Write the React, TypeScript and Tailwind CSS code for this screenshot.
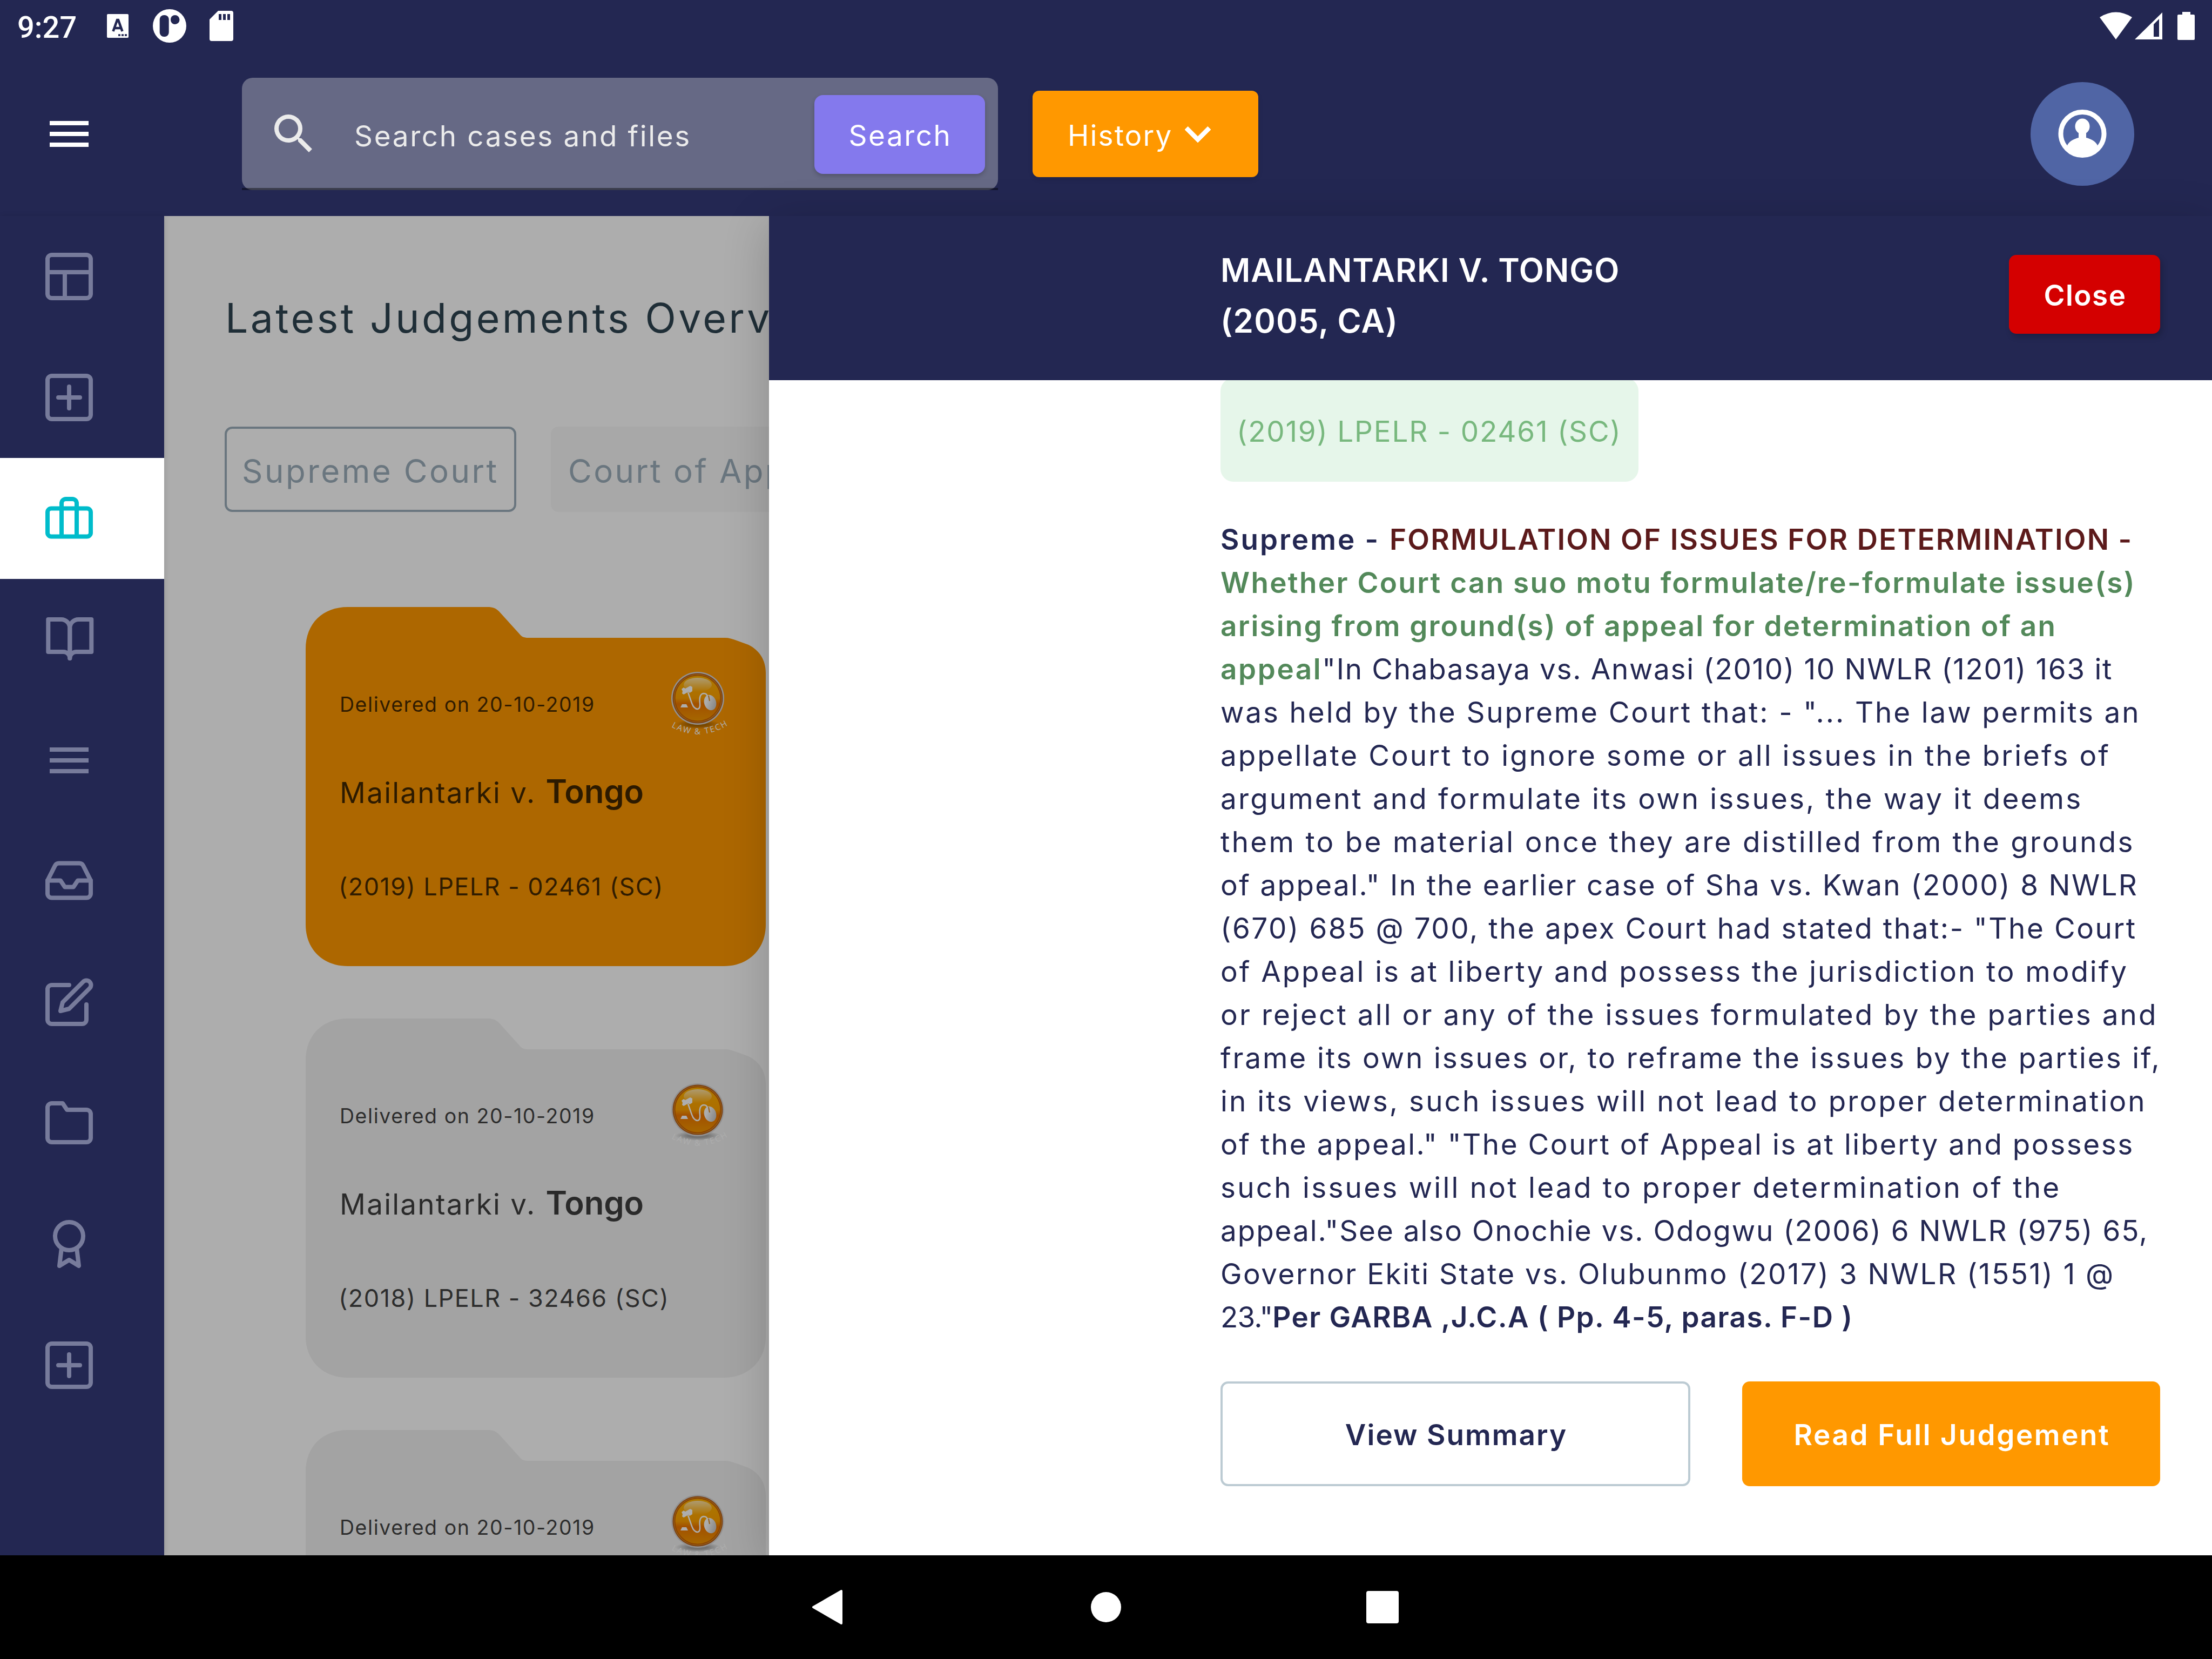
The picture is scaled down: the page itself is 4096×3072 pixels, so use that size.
import React from "react";

/* ---------- icons ---------- */

function Stroke({ children }: { children: React.ReactNode }) {
  return (
    <svg
      viewBox="0 0 96 96"
      className="block size-[96px]"
      fill="none"
      stroke="currentColor"
      strokeWidth="8"
      strokeLinecap="round"
      strokeLinejoin="round"
    >
      {children}
    </svg>
  );
}

const layoutIcon = (
  <>
    <rect x="8" y="8" width="80" height="80" rx="8" />
    <path d="M8 40H88M40 40V88" strokeLinecap="butt" />
  </>
);
const plusIcon = (
  <>
    <rect x="8" y="8" width="80" height="80" rx="8" />
    <path d="M48 28V68M28 48H68" />
  </>
);
const caseIcon = (
  <>
    <rect x="8" y="29.5" width="80" height="52" rx="7" />
    <path d="M34 81V20a8 8 0 0 1 8-8h12a8 8 0 0 1 8 8V81" />
  </>
);
const bookIcon = (
  <g transform="translate(1.3 -1)">
    <path d="M8 12H32A16 16 0 0 1 48 28V84A12 12 0 0 0 36 72H8Z" />
    <path d="M88 12H64A16 16 0 0 0 48 28V84A12 12 0 0 1 60 72H88Z" />
  </g>
);
const linesIcon = <path d="M12 28H84M12 48H84M12 68H84" strokeLinecap="butt" />;
const inboxIcon = (
  <g transform="translate(0 -1.5) scale(4)" strokeWidth="2">
    <path d="M22 12H16L14 15H10L8 12H2" />
    <path d="M5.45 5.11L2 12v6a2 2 0 0 0 2 2h16a2 2 0 0 0 2-2v-6l-3.45-6.89A2 2 0 0 0 16.76 4H7.24a2 2 0 0 0-1.79 1.11z" />
  </g>
);
const editIcon = (
  <g transform="scale(4)" strokeWidth="2">
    <path d="M12 4H4a2 2 0 0 0-2 2v14a2 2 0 0 0 2 2h14a2 2 0 0 0 2-2v-7" />
    <path d="M18.5 2.5a2.121 2.121 0 0 1 3 3L12 15l-4 1 1-4 9.5-9.5z" />
  </g>
);
const folderIcon = (
  <g transform="translate(0 -1) scale(4)" strokeWidth="2">
    <path d="M22 19a2 2 0 0 1-2 2H4a2 2 0 0 1-2-2V5a2 2 0 0 1 2-2h5l2 3h9a2 2 0 0 1 2 2z" />
  </g>
);
const awardIcon = (
  <>
    <circle cx="48" cy="33" r="26" />
    <path d="M34 55L30 88L48 77L66 88L62 55" />
  </>
);

const sideItems = [
  { icon: layoutIcon, active: false },
  { icon: plusIcon, active: false },
  { icon: caseIcon, active: true },
  { icon: bookIcon, active: false },
  { icon: linesIcon, active: false },
  { icon: inboxIcon, active: false },
  { icon: editIcon, active: false },
  { icon: folderIcon, active: false },
  { icon: awardIcon, active: false },
  { icon: plusIcon, active: false },
];

function LawTechLogo({ id }: { id: string }) {
  return (
    <svg viewBox="0 0 103 118" className="block h-[118px] w-[103px] overflow-visible">
      <defs>
        <linearGradient id={`${id}-body`} x1="0" y1="0" x2="0" y2="1">
          <stop offset="0" stopColor="#ffb300" />
          <stop offset="0.5" stopColor="#ffa200" />
          <stop offset="0.62" stopColor="#ee7600" />
          <stop offset="1" stopColor="#f59a00" />
        </linearGradient>
        <linearGradient id={`${id}-gloss`} x1="0" y1="0" x2="0" y2="1">
          <stop offset="0" stopColor="#fff" stopOpacity="0.65" />
          <stop offset="1" stopColor="#fff" stopOpacity="0" />
        </linearGradient>
        <linearGradient id={`${id}-mouse`} x1="0" y1="0" x2="1" y2="1">
          <stop offset="0.3" stopColor="#fff" />
          <stop offset="1" stopColor="#b9b9b9" />
        </linearGradient>
        <radialGradient id={`${id}-shade`}>
          <stop offset="0.4" stopColor="#000" stopOpacity="0.3" />
          <stop offset="1" stopColor="#000" stopOpacity="0" />
        </radialGradient>
        <path id={`${id}-arc`} d="M1 102Q51 130 102 101" />
      </defs>
      <ellipse cx="50" cy="97" rx="42" ry="9" fill={`url(#${id}-shade)`} />
      <circle cx="50" cy="49" r="49" fill="#d8d8d8" />
      <circle cx="50" cy="49" r="46.500" fill="#b8601c" />
      <circle cx="50" cy="49" r="44.500" fill="#e0a030" />
      <circle cx="50" cy="49" r="42.500" fill={`url(#${id}-body)`} stroke="#cf6400" strokeWidth="2" />
      <ellipse cx="50" cy="24" rx="26" ry="13" fill={`url(#${id}-gloss)`} />
      <path d="M20 32L24 29L27 31L36 26L40 28L40 36L35 39L33 37L24 42L21 40L22 36Z" fill="#fff" />
      <path d="M32 38L39 58Q43 69 50 69Q55 68 54 58Q52 41 61 40Q67 40 68 46" fill="none" stroke="#fff" strokeWidth="2.500" />
      <path d="M18 66L21 60H29L32 66Z" fill="#fff" />
      <ellipse cx="73" cy="57" rx="11" ry="14.500" fill={`url(#${id}-mouse)`} transform="rotate(-18 73 57)" />
      <path d="M70 44L72 54" fill="none" stroke="#d98a20" strokeWidth="2" />
      <text fill="#fff" fontSize="15.500" fontFamily="Open Sans, sans-serif">
        <textPath href={`#${id}-arc`} textLength="110">
          LAW &amp; TECH
        </textPath>
      </text>
    </svg>
  );
}

/* ---------- system bars ---------- */

function StatusBar() {
  return (
    <div className="flex h-[96px] items-center justify-between">
      <div className="flex items-center pl-[32px]">
        <span className="w-[166px] pt-[6px] font-['Roboto',sans-serif] text-[56px] leading-[60px] font-medium text-white">
          9:27
        </span>
        <svg viewBox="0 0 40 44" className="block h-[44px] w-[40px]">
          <rect width="40" height="44" rx="2" fill="#fff" />
          <path d="M11.500 32L19 11H21L28.500 32M14 26H26" fill="none" stroke="#232752" strokeWidth="4.500" />
          <path d="M21 39H37" stroke="#232752" strokeWidth="3.500" strokeDasharray="4 2" />
        </svg>
        <svg viewBox="0 0 62 62" className="ml-[45px] block size-[62px]">
          <circle cx="31" cy="31" r="31" fill="#fff" />
          <rect x="12.700" y="11" width="17" height="40" rx="8" fill="#232752" />
          <path d="M33 19a8 8 0 0 1 8-8a8.500 8.500 0 0 1 0 17a8 8 0 0 1-8-8z" fill="#232752" />
        </svg>
        <svg viewBox="0 0 44 56" className="ml-[43px] block h-[56px] w-[44px]">
          <path d="M16 0H40a4 4 0 0 1 4 4V52a4 4 0 0 1-4 4H4a4 4 0 0 1-4-4V16Z" fill="#fff" />
          <path d="M17 6h5v11h-5zM25 6h5v11h-5zM33 6h5v11h-5z" fill="#232752" />
        </svg>
      </div>
      <div className="flex items-center pr-[32px]">
        <svg viewBox="0 0 60 52" className="block h-[52px] w-[60px]">
          <path d="M0 10Q30 -9 60 10L30 51Z" fill="#fff" />
        </svg>
        <svg viewBox="0 0 52 50" className="ml-[5px] block h-[50px] w-[52px]">
          <path fillRule="evenodd" d="M0 50L51 0V50ZM35 45H45V12L35 22Z" fill="#fff" />
        </svg>
        <svg viewBox="0 0 32 52" className="ml-[27px] block h-[52px] w-[32px]">
          <path d="M9 0H24V5H30a2 2 0 0 1 2 2V50a2 2 0 0 1-2 2H2a2 2 0 0 1-2-2V7a2 2 0 0 1 2-2H9Z" fill="#fff" />
        </svg>
      </div>
    </div>
  );
}

function NavigationBar() {
  return (
    <nav className="relative z-20 flex h-[192px] items-center justify-center bg-black">
      <div className="flex w-[512px] justify-center">
        <svg viewBox="0 0 96 96" className="block size-[96px]">
          <path d="M70 18V78L18 48Z" fill="#fff" stroke="#fff" strokeWidth="4" strokeLinejoin="round" />
        </svg>
      </div>
      <div className="flex w-[512px] justify-center">
        <div className="size-[56px] rounded-full bg-white" />
      </div>
      <div className="flex w-[512px] justify-center">
        <div className="size-[60px] rounded-[4px] bg-white" />
      </div>
    </nav>
  );
}

/* ---------- app chrome ---------- */

function TopBar() {
  return (
    <header className="flex h-[304px] items-center">
      <button className="w-[304px] pl-[80px] text-white">
        <Stroke>{linesIcon}</Stroke>
      </button>
      <div className="relative ml-[144px] h-[208px] w-[1400px]">
        <div className="flex h-full items-center rounded-[20px] bg-[#666985] pr-[24px] pl-[48px]">
          <svg viewBox="0 0 24 24" className="block size-[96px]" fill="#ebebeb">
            <path d="M15.500 14h-.79l-.28-.27A6.471 6.471 0 0 0 16 9.500 6.500 6.500 0 1 0 9.500 16c1.610 0 3.090-.59 4.230-1.570l.27.28v.79l5 4.990L20.490 19l-4.990-5zm-6 0C7.010 14 5 11.990 5 9.500S7.010 5 9.500 5 14 7.010 14 9.500 11.990 14 9.500 14z" />
          </svg>
          <span className="ml-[64px] flex-1 pt-[7px] text-[53px] leading-[80px] tracking-[2.65px] text-[#ebebeb]">
            Search cases and files
          </span>
          <button className="mt-[2px] flex h-[146px] w-[316px] items-center justify-center rounded-[16px] bg-[#8479ed] pt-[4px] pl-[2px] text-[53px] leading-[80px] tracking-[2.5px] text-white shadow-[0_4px_8px_rgba(0,0,0,0.2)]">
            Search
          </button>
        </div>
        <div className="absolute bottom-0 left-0 h-[4px] w-full bg-black/42" />
      </div>
      <button className="ml-[64px] flex h-[160px] w-[418px] items-center rounded-[12px] bg-[#ff9800] pl-[65px] text-white shadow-[0_4px_8px_rgba(0,0,0,0.12)]">
        <span className="w-[193px] pt-[6px] text-left text-[53px] leading-[80px] tracking-[2.15px]">History</span>
        <svg viewBox="0 0 24 24" className="block size-[96px]" fill="currentColor">
          <path d="M16.590 8.590L12 13.170 7.410 8.590 6 10l6 6 6-6z" stroke="currentColor" strokeWidth="0.2" />
        </svg>
      </button>
      <button className="mr-[144px] ml-auto flex size-[192px] items-center justify-center rounded-full bg-[#5065a5]">
        <svg viewBox="0 0 96 96" className="block size-[96px]">
          <circle cx="48" cy="47.500" r="40" fill="none" stroke="#fff" strokeWidth="9" />
          <ellipse cx="48" cy="34" rx="13.500" ry="14.500" fill="#fff" />
          <path
            d="M41 44H55V55C63 57 72 61 76 69C70 82 60 88 48 88C36 88 26 82 20 69C24 61 33 57 41 55Z"
            fill="#fff"
          />
        </svg>
      </button>
    </header>
  );
}

function Sidebar() {
  return (
    <aside className="relative z-[1] w-[304px] shrink-0 bg-[#232752] shadow-[2px_0_10px_rgba(0,0,0,0.1)]">
      {sideItems.map((item, i) => (
        <div
          key={i}
          className={
            item.active
              ? "flex h-[224px] items-center bg-white pl-[80px] text-[#00bccb]"
              : "flex h-[224px] items-center pl-[80px] text-[#777b9b]"
          }
        >
          <Stroke>{item.icon}</Stroke>
        </div>
      ))}
    </aside>
  );
}

/* ---------- judgements list ---------- */

function FolderCard({ id, fill, citation, tracking }: { id: string; fill: string; citation: string; tracking: string }) {
  return (
    <article className="relative h-[665px] w-[852px] shrink-0 text-black/74">
      <svg viewBox="0 0 852 665" className="absolute inset-0 h-full w-full">
        <path
          d="M0 78C0 30 32 0 78 0H337C346 0 352 2 358 8L396 50C400 55 404 57 412 57H776C784 57 790 59 798 62L820 70C840 80 852 98 852 122V588C852 634 820 665 774 665H78C32 665 0 634 0 588Z"
          fill={fill}
        />
      </svg>
      <div className="relative flex flex-col pt-[120px] pl-[63px]">
        <div className="flex h-[116px] justify-between pr-[73px]">
          <span className="pt-[31px] text-[37.5px] leading-[60px] tracking-[1.55px]">Delivered on 20-10-2019</span>
          <LawTechLogo id={id} />
        </div>
        <div className="mt-[65px] flex items-baseline leading-[80px]">
          <span className="text-[53px] tracking-[2.25px]">Mailantarki v.</span>
          <span className="ml-[18px] text-[60px] font-semibold tracking-[-0.2px]">Tongo</span>
        </div>
        <span className={`mt-[104px] ml-[-2px] text-[45px] leading-[60px] ${tracking}`}>{citation}</span>
      </div>
    </article>
  );
}

function JudgementsOverview() {
  return (
    <section className="relative h-full w-full overflow-hidden bg-white pt-[142px] pl-[112px] whitespace-nowrap">
      <h1 className="pl-[1px] text-[75px] leading-[94px] tracking-[4.4px] text-[#2e4451]">
        Latest Judgements Overview
      </h1>
      <div className="mt-[154px] flex gap-[64px] text-[60px] leading-[90px] text-[#9dafbb]">
        <div className="flex h-[158px] w-[540px] items-center rounded-[14px] border-[4px] border-[#9dafbb] pt-[6px] pl-[28px] tracking-[3.5px]">
          Supreme Court
        </div>
        <div className="flex h-[158px] w-[560px] items-center rounded-[14px] bg-[#f8f8f8] pt-[6px] pl-[32px] tracking-[3.3px]">
          Court of Appeal
        </div>
      </div>
      <div className="mt-[176px] ml-[150px] flex flex-col gap-[97px]">
        <FolderCard id="c1" fill="#ff9800" citation="(2019) LPELR - 02461 (SC)" tracking="tracking-[1.4px]" />
        <FolderCard id="c2" fill="#f0f0f0" citation="(2018) LPELR - 32466 (SC)" tracking="tracking-[1.46px]" />
        <FolderCard id="c3" fill="#f0f0f0" citation="(2018) LPELR - 32466 (SC)" tracking="tracking-[1.46px]" />
      </div>
      <div className="absolute inset-0 bg-black/32" />
    </section>
  );
}

/* ---------- case drawer ---------- */

const bodyLines: [string, string][] = [
  ['was held by the Supreme Court that: - "... The law permits an', "tracking-[2.9px]"],
  ["appellate Court to ignore some or all issues in the briefs of", "tracking-[3.06px]"],
  ["argument and formulate its own issues, the way it deems", "tracking-[3.15px]"],
  ["them to be material once they are distilled from the grounds", "tracking-[3.3px]"],
  ['of appeal." In the earlier case of Sha vs. Kwan (2000) 8 NWLR', "tracking-[2.38px]"],
  ['(670) 685 @ 700, the apex Court had stated that:- "The Court', "tracking-[2.56px]"],
  ["of Appeal is at liberty and possess the jurisdiction to modify", "tracking-[2.95px]"],
  ["or reject all or any of the issues formulated by the parties and", "tracking-[3.1px]"],
  ["frame its own issues or, to reframe the issues by the parties if,", "tracking-[2.9px]"],
  ["in its views, such issues will not lead to proper determination", "tracking-[3.1px]"],
  ['of the appeal." "The Court of Appeal is at liberty and possess', "tracking-[2.55px]"],
  ["such issues will not lead to proper determination of the", "tracking-[3.25px]"],
  ['appeal."See also Onochie vs. Odogwu (2006) 6 NWLR (975) 65,', "tracking-[1.98px]"],
  ["Governor Ekiti State vs. Olubunmo (2017) 3 NWLR (1551) 1 @", "tracking-[2.5px]"],
];

function CaseDrawer() {
  return (
    <section className="absolute top-0 right-0 bottom-0 z-10 flex w-[2672px] flex-col bg-white shadow-[0_16px_80px_rgba(0,0,0,0.2)]">
      <div className="flex h-[304px] shrink-0 items-start justify-between bg-[#232752] pr-[96px] pl-[836px] text-white">
        <h2 className="pt-[53px] text-[60px] leading-[94px] font-semibold">
          <span className="block tracking-[0.9px]">MAILANTARKI V. TONGO</span>
          <span className="block tracking-[1.2px]">(2005, CA)</span>
        </h2>
        <button className="mt-[72px] flex h-[146px] w-[280px] items-center justify-center rounded-[14px] bg-[#d40000] pt-[4px] pl-[2px] text-[53px] leading-[80px] font-semibold tracking-[1.5px] shadow-[4px_6px_12px_rgba(0,0,0,0.2)]">
          Close
        </button>
      </div>
      <div className="flex-1 overflow-hidden pr-[96px] pl-[836px] whitespace-nowrap">
        <div className="mt-[-4px] flex h-[192px] w-[774px] items-center rounded-[24px] bg-[#e6f6ea] pt-[6px] pl-[30px] text-[53px] leading-[80px] tracking-[1.8px] text-[#78b87e]">
          (2019) LPELR - 02461 (SC)
        </div>
        <div className="mt-[67px] text-[53px] leading-[80px] text-[#232752]">
          <div className="flex h-[80px]">
            <span className="w-[313px] font-semibold tracking-[3px]">Supreme -</span>
            <span className="font-semibold tracking-[2.15px] text-[#5c1a1b]">FORMULATION OF ISSUES FOR DETERMINATION -</span>
          </div>
          <div className="h-[80px] font-semibold tracking-[2.32px] text-[#53895a]">
            Whether Court can suo motu formulate/re-formulate issue(s)
          </div>
          <div className="h-[80px] font-semibold tracking-[2.2px] text-[#53895a]">
            arising from ground(s) of appeal for determination of an
          </div>
          <div className="flex h-[80px]">
            <span className="font-semibold tracking-[2.6px] text-[#53895a]">appeal</span>
            <span className="tracking-[1.7px]">"In Chabasaya vs. Anwasi (2010) 10 NWLR (1201) 163 it</span>
          </div>
          {bodyLines.map(([text, tracking]) => (
            <div key={text} className={`h-[80px] ${tracking}`}>
              {text}
            </div>
          ))}
          <div className="flex h-[80px]">
            <span className="tracking-[-0.8px]">23."</span>
            <span className="font-semibold tracking-[1.45px]">Per GARBA ,J.C.A ( Pp. 4-5, paras. F-D )</span>
          </div>
        </div>
        <div className="mt-[79px] flex justify-between text-[53px] leading-[80px] font-semibold">
          <button className="flex h-[194px] w-[870px] items-center justify-center rounded-[14px] border-[4px] border-[#bccbd3] pt-[4px] pl-[3px] tracking-[2.05px] text-[#232752]">
            View Summary
          </button>
          <button className="flex h-[194px] w-[774px] items-center justify-center rounded-[14px] bg-[#ff9800] pt-[4px] pl-[3px] tracking-[2.6px] text-white">
            Read Full Judgement
          </button>
        </div>
      </div>
    </section>
  );
}

export default function App() {
  return (
    <div className="flex h-[3072px] w-[4096px] flex-col overflow-hidden bg-[#232752] font-['Inter',sans-serif]">
      <StatusBar />
      <TopBar />
      <main className="relative flex h-[2480px]">
        <Sidebar />
        <JudgementsOverview />
        <CaseDrawer />
      </main>
      <NavigationBar />
    </div>
  );
}
